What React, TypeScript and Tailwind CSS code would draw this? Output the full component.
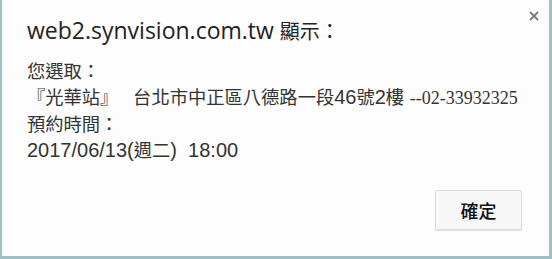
import React from 'react';

function Cjk({ children }: { children: React.ReactNode }) {
  return (
    <span className="font-['Noto_Sans_CJK_TC','Noto_Sans_CJK_SC',sans-serif] text-[18.3px] leading-[20px]">
      {children}
    </span>
  );
}

export default function App() {
  return (
    <div className="h-[259px] w-[552px] bg-[#9fc1c4] pb-[3px] pl-[2px] pr-[3px]">
      <div className="relative flex h-full flex-col bg-[#fdfdfd] text-[#333]">
        <button className="absolute right-[7px] top-[8px] flex h-[16px] w-[16px] items-center justify-center text-[#7a7a7a]">
          <svg width="10" height="10" viewBox="0 0 10 10">
            <path d="M1 1L9 9M9 1L1 9" stroke="currentColor" strokeWidth="1.8" />
          </svg>
        </button>

        <h1 className="pl-[25px] pt-[16px] font-['Open_Sans','Noto_Sans_CJK_TC',sans-serif] text-[23px] leading-[28px] text-[#222]">
          web2.synvision.com.tw{' '}
          <span className="font-['Noto_Sans_CJK_TC',sans-serif] text-[20px] leading-none">顯示：</span>
        </h1>

        <div className="mt-[14px] pl-[25px] font-['Liberation_Sans','Noto_Sans_CJK_TC',sans-serif] text-[20px] leading-[26px] text-[#333]">
          <p>
            <Cjk>您選取：</Cjk>
          </p>
          <p>
            <Cjk>『光華站』　</Cjk> <Cjk>台北市中正區八德路一段</Cjk>46<Cjk>號</Cjk>2<Cjk>樓</Cjk>{' '}
            <span className="font-['Liberation_Serif',serif] text-[18px]">--02-33932325</span>
          </p>
          <p>
            <Cjk>預約時間：</Cjk>
          </p>
          <p>
            2017/06/13(<Cjk>週二</Cjk>)&nbsp; 18:00
          </p>
        </div>

        <div className="mt-auto flex justify-end pb-[26px] pr-[27px]">
          <button className="h-[40px] w-[87px] rounded-[2px] border border-[#dcdcdc] bg-[#f7f7f7] font-['Noto_Sans_CJK_TC',sans-serif] text-[18px] font-medium text-[#111] shadow-[0_1px_1px_rgba(0,0,0,0.12)]">
            確定
          </button>
        </div>
      </div>
    </div>
  );
}
